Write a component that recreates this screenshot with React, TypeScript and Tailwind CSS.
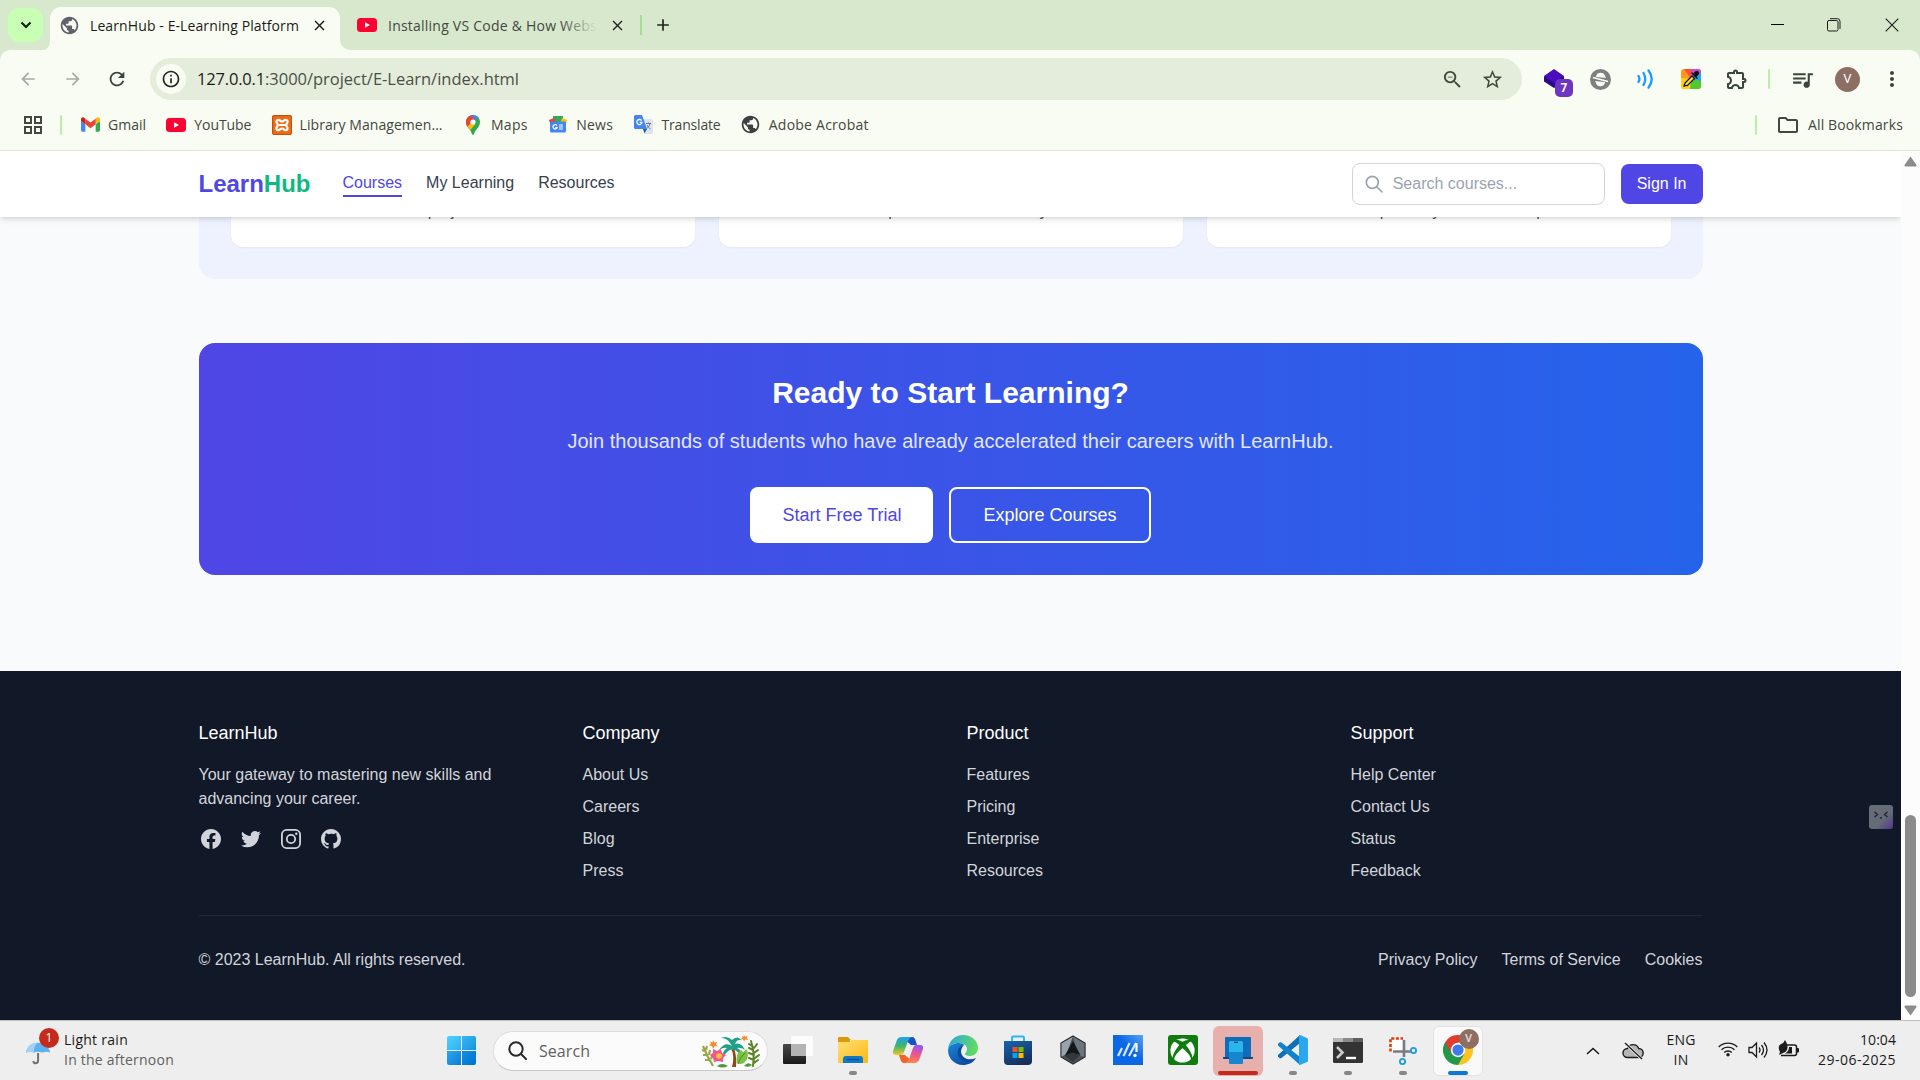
import { useLayoutEffect, useRef, useState, type ReactNode } from "react";
import {
  MdArrowBack,
  MdArrowForward,
  MdRefresh,
  MdOutlineInfo,
  MdZoomOut,
  MdStarOutline,
  MdOutlineExtension,
  MdQueueMusic,
  MdMoreVert,
  MdOutlineFolder,
  MdOutlineGridView,
  MdPublic,
  MdClose,
  MdAdd,
} from "react-icons/md";
import { FaXbox } from "react-icons/fa";

/* Single-line label whose tracking is adjusted so it fills a given width. */
function Fit({ w, className = "", children }: { w: number; className?: string; children: string }) {
  const ref = useRef<HTMLSpanElement>(null);
  const [ls, setLs] = useState(0);
  useLayoutEffect(() => {
    if (ref.current) {
      const natural = ref.current.getBoundingClientRect().width - ls * children.length;
      setLs((w - natural) / children.length);
    }
  }, []);
  return (
    <span ref={ref} className={`inline-block shrink-0 whitespace-pre ${className}`} style={{ letterSpacing: `${ls}px` }}>
      {children}
    </span>
  );
}

function YouTubeIcon() {
  return (
    <svg width="20" height="20" viewBox="0 0 20 20">
      <rect x="0" y="3" width="20" height="14" rx="3.5" fill="#ff0033" />
      <path d="M8 7.2 13 10l-5 2.8z" fill="#fff" />
    </svg>
  );
}

function GmailIcon() {
  return (
    <svg width="19" height="15" viewBox="52 42 88 66">
      <path fill="#4285f4" d="M58 108h14V74L52 59v43c0 3.32 2.69 6 6 6" />
      <path fill="#34a853" d="M120 108h14c3.32 0 6-2.69 6-6V59l-20 15" />
      <path fill="#fbbc04" d="M120 48v26l20-15v-8c0-7.42-8.47-11.65-14.4-7.2" />
      <path fill="#ea4335" d="M72 74V48l24 18 24-18v26L96 92" />
      <path fill="#c5221f" d="M52 51v8l20 15V48l-5.600-4.200c-5.940-4.450-14.400-.22-14.400 7.200" />
    </svg>
  );
}

function XamppIcon() {
  return (
    <svg width="20" height="20" viewBox="0 0 20 20">
      <rect width="20" height="20" rx="2" fill="#ef6c16" />
      <rect x="0.600" y="0.600" width="18.800" height="18.800" rx="1.600" fill="none" stroke="#b9500c" strokeWidth="1" />
      <path
        d="M6.500 4.800c-2 0-2.800 2-1.400 3.600 1 1.100 1 2.100 0 3.200-1.400 1.600-.6 3.600 1.400 3.600 1.500 0 1.800-1.700 3.500-1.700s2 1.700 3.500 1.700c2 0 2.800-2 1.400-3.600-1-1.100-1-2.100 0-3.200 1.400-1.600.6-3.600-1.400-3.600-1.500 0-1.800 1.700-3.500 1.700S8 4.800 6.500 4.800z"
        fill="none"
        stroke="#fff"
        strokeWidth="2.200"
      />
      <path d="M7 10h6" stroke="#fff" strokeWidth="2" />
    </svg>
  );
}

function MapsIcon() {
  return (
    <svg width="14" height="20" viewBox="0 0 14 20">
      <path d="M7 0C3 0 0 3 0 7c0 3.500 2 5.500 4 8 1.500 2 2 5 3 5s1.500-3 3-5c2-2.500 4-4.500 4-8 0-4-3-7-7-7z" fill="#34a853" />
      <path d="M0 7c0 2 .7 3.700 1.800 5.200L9.500 3 4.800.5C2 1.500 0 4 0 7z" fill="#ea4335" />
      <path d="M4.800.4 9.500 5l3.200-2.200C11 .8 7.500-.6 4.800.4z" fill="#4285f4" />
      <path d="m1.500 11.700 4-4.700 3.500 2.500-4.600 5.600c-1-1.200-2-2.200-2.900-3.400z" fill="#fbbc04" />
      <circle cx="7" cy="7" r="2.600" fill="#fff" />
    </svg>
  );
}

function NewsIcon() {
  return (
    <svg width="18" height="17" viewBox="0 0 18 17">
      <path d="M4 0h10v6H4z" fill="#34a853" />
      <path d="m0 4 5-2 2 5H1z" fill="#ea4335" />
      <path d="m18 4-5-2-2 5h6z" fill="#fbbc04" />
      <rect x="1" y="5.500" width="16" height="11" rx="1.500" fill="#4285f4" />
      <path d="M8 9.500a2.200 2.200 0 1 0 .2 2.200H6.200M10 9h4M10 11h4M10 13h4" stroke="#fff" strokeWidth="1.200" fill="none" />
    </svg>
  );
}

function TranslateIcon() {
  return (
    <svg width="19" height="19" viewBox="0 0 19 19">
      <path d="M8 4h9.500A1.500 1.500 0 0 1 19 5.500v12a1.500 1.500 0 0 1-1.500 1.500H11z" fill="#dfe3ea" />
      <path d="M1.500 0H8l5 14H1.500A1.500 1.500 0 0 1 0 12.500v-11A1.500 1.500 0 0 1 1.500 0z" fill="#4285f4" />
      <path d="m9 14 4 0-2.500 4.500z" fill="#1a56c4" />
      <path d="M7.500 5.500a2.600 2.600 0 1 0 .5 2H5.700" stroke="#fff" strokeWidth="1.300" fill="none" />
      <path d="M12 8.500h5M14.500 7.500v1M16 8.500c-.5 2.500-2 4-3.200 5M13 10c.8 2 2 3 3.500 4" stroke="#6b7785" strokeWidth="1" fill="none" />
    </svg>
  );
}

function Divider({ className = "" }: { className?: string }) {
  return <div className={`h-5 w-0.5 rounded bg-[#b9f0a8] ${className}`} />;
}

function TabStrip() {
  return (
    <div className="flex h-[50px] items-end bg-[#d7e8cd] font-['Open_Sans',sans-serif] text-[14px] text-[#1b1c18]">
      <div className="mb-2 ml-2 flex h-[34px] w-[35px] items-center justify-center rounded-[11px] bg-[#c9ffb5]">
        <svg width="12" height="8" viewBox="0 0 12 8" fill="none" stroke="#14210f" strokeWidth="2.200">
          <path d="m1.500 1.500 4.500 4.500 4.500-4.500" />
        </svg>
      </div>
      <svg width="7" height="10" viewBox="0 0 8 10" className="shrink-0" preserveAspectRatio="none">
        <path d="M8 0v10H0c5 0 8-4 8-10z" fill="#f8fcf2" />
      </svg>
      <div className="flex h-[43px] w-[290px] items-center rounded-t-[11px] bg-[#f8fcf2] pb-[7px] pl-[9px]">
        <MdPublic size={21} color="#5f6368" />
        <Fit w={209} className="ml-[10px]">LearnHub - E-Learning Platform</Fit>
        <MdClose size={17} className="ml-[12px]" />
      </div>
      <svg width="12" height="10" viewBox="0 0 12 10" className="shrink-0">
        <path d="M0 0v10h12C5 10 0 6 0 0z" fill="#f8fcf2" />
      </svg>
      <div className="flex h-[43px] items-center pb-[7px] pl-[5px] text-[#43483f]">
        <YouTubeIcon />
        <div className="relative ml-[11px] w-[209px] overflow-hidden">
          <Fit w={209}>{"Installing VS Code & How Webs"}</Fit>
          <div className="absolute inset-y-0 right-0 w-9 bg-gradient-to-r from-transparent to-[#d7e8cd]" />
        </div>
        <MdClose size={17} className="ml-[12px] text-[#22251f]" />
        <div className="ml-[14px] h-5 w-0.5 bg-[#a6dd94]" />
        <MdAdd size={20} className="ml-[11px] text-[#22251f]" />
      </div>
      <div className="ml-auto flex h-[50px] items-center pb-px text-[#1c1c1c]">
        <div className="mr-[43px] h-px w-[13px] bg-black" />
        <svg width="14" height="14" viewBox="0 0 14 14" fill="none" stroke="currentColor" className="mr-[44px]">
          <rect x="0.500" y="2.500" width="10.500" height="10.500" rx="1.500" />
          <path d="M3 .7h7.500a2.500 2.500 0 0 1 2.500 2.500V11" />
        </svg>
        <svg width="14" height="14" viewBox="0 0 14 14" stroke="currentColor" strokeWidth="1.100" className="mr-[21px]">
          <path d="m.7.7 12.600 12.600M13.300.7.7 13.300" />
        </svg>
      </div>
    </div>
  );
}

function Toolbar() {
  return (
    <div className="flex h-[58px] items-center rounded-t-[10px] bg-[#f8fcf2] font-['Open_Sans',sans-serif]">
      <MdArrowBack size={20} className="ml-[18px] text-[#a7aba2]" />
      <MdArrowForward size={20} className="ml-[25px] text-[#a7aba2]" />
      <MdRefresh size={22} className="ml-[23px] text-[#3a4636]" />
      <div className="ml-[22px] flex h-[42px] w-[1372px] items-center rounded-full bg-[#e4eddc] pl-[6px]">
        <div className="flex size-[30px] items-center justify-center rounded-full bg-[#f8fcf2]">
          <MdOutlineInfo size={20} color="#1f2a1b" />
        </div>
        <div className="ml-[11px] flex pt-px text-[16.500px]">
          <Fit w={68} className="text-[#1b1c18]">127.0.0.1</Fit>
          <Fit w={254} className="text-[#4b5046]">:3000/project/E-Learn/index.html</Fit>
        </div>
        <MdZoomOut size={23} className="ml-auto text-[#43483f]" />
        <MdStarOutline size={23} className="mr-[18px] ml-[17px] text-[#43483f]" />
      </div>
      <div className="relative ml-[22px] h-[26px] w-[31px]">
        <svg width="22" height="22" viewBox="0 0 22 22" className="mt-[3px]">
          <path d="m10 1 10 6.500v5L10 19 0 12.500v-5z" fill="#2a0a85" />
          <path d="m10 0 10 7-10 7L0 7z" fill="#4b0cc0" />
        </svg>
        <div className="absolute top-[13px] left-[11px] flex h-[18px] w-[18px] items-center justify-center rounded-[5px] bg-[#6c35c2] font-['Roboto',sans-serif] text-[12px] font-bold text-white">7</div>
      </div>
      <svg width="21" height="21" viewBox="0 0 21 21" className="ml-[15px]">
        <circle cx="10.500" cy="10.500" r="10.500" fill="#808080" />
        <path d="M6 8a4.600 4.600 0 0 1 9-1l1 2c-3 0-6-1-10-1zM15 13a4.600 4.600 0 0 1-9 1l-1-2c3 0 6 1 10 1z" fill="#f8fcf2" />
        <path d="m3 8.500 15 4" stroke="#f8fcf2" strokeWidth="1.800" />
      </svg>
      <svg width="17" height="20" viewBox="0 0 17 20" fill="none" stroke="#1a9bfc" strokeWidth="2.300" strokeLinecap="round" className="ml-[26px]">
        <path d="M1.500 7c1.200 2 1.200 4 0 6M6.500 4c2.300 4 2.300 8 0 12M11.500 1.500c4.200 5.500 4.200 11.500 0 17" />
      </svg>
      <svg width="20" height="20" viewBox="0 0 20 20" className="ml-[27px]">
        <defs>
          <clipPath id="picker"><rect width="20" height="20" rx="3" /></clipPath>
        </defs>
        <g clipPath="url(#picker)">
          <rect width="20" height="20" fill="#ff9a1f" />
          <path d="M10 10 3 0h9z" fill="#ff4a3d" />
          <path d="M10 10 11 0h9v6z" fill="#c24be0" />
          <path d="M10 10 20 4v9z" fill="#23a4f5" />
          <path d="M10 10 20 12v8H8z" fill="#54c92f" />
          <path d="M10 10 0 9v11h9z" fill="#ffd21c" />
        </g>
        <path d="m3 17 1-3 7-7 2.500 2.500-7 7z" fill="#ffe12b" stroke="#111" strokeWidth="1.300" />
        <path d="m10 4 6 6 1-1-1.500-1.500C18 6 19 4 17.500 2.500S14 2 12.500 4.500L11 3z" fill="#111" />
      </svg>
      <MdOutlineExtension size={24} className="ml-[24px] text-[#3a4636]" />
      <Divider className="ml-[19px]" />
      <MdQueueMusic size={25} className="ml-[20px] text-[#3a4636]" />
      <div className="ml-[20px] flex size-[25px] items-center justify-center rounded-full bg-[#8d6e63] font-['Roboto',sans-serif] text-[13px] text-white">V</div>
      <MdMoreVert size={24} className="ml-[20px] text-[#3a4636]" />
    </div>
  );
}

const bookmarks: { label: string; w: number; icon: ReactNode }[] = [
  { label: "Gmail", w: 38, icon: <GmailIcon /> },
  { label: "YouTube", w: 57, icon: <YouTubeIcon /> },
  { label: "Library Managemen...", w: 143, icon: <XamppIcon /> },
  { label: "Maps", w: 37, icon: <MapsIcon /> },
  { label: "News", w: 37, icon: <NewsIcon /> },
  { label: "Translate", w: 59, icon: <TranslateIcon /> },
  { label: "Adobe Acrobat", w: 100, icon: <MdPublic size={21} color="#3c4043" className="shrink-0" /> },
];

function BookmarkBar() {
  return (
    <div className="flex h-[43px] items-center border-b border-[#dfe6d3] bg-[#f8fcf2] pb-[9px] font-['Open_Sans',sans-serif] text-[14px] text-[#43483f]">
      <MdOutlineGridView size={24} className="ml-[21px] text-[#43483f]" />
      <Divider className="ml-[15px]" />
      <div className="ml-[18px] flex gap-[20.300px]">
        {bookmarks.map((b) => (
          <div key={b.label} className="flex items-center gap-2">
            <div className="flex w-5 shrink-0 items-center justify-center">{b.icon}</div>
            <Fit w={b.w} className="-mt-px">{b.label}</Fit>
          </div>
        ))}
      </div>
      <Divider className="ml-auto" />
      <MdOutlineFolder size={24} className="ml-[19px]" />
      <Fit w={95} className="-mt-px mr-[17px] ml-[8px]">All Bookmarks</Fit>
    </div>
  );
}

function SiteHeader() {
  return (
    <header className="relative z-10 flex h-[66px] shrink-0 items-center bg-white px-[198.500px] shadow-md">
      <div className="text-2xl font-bold text-[#4f46e5]">
        Learn<span className="text-[#10b981]">Hub</span>
      </div>
      <nav className="ml-8 flex h-[66px] items-start gap-6 pt-[20px] text-base text-[#374151]">
        <a className="h-[26px] border-b-2 border-[#4f46e5] text-[#4f46e5]">Courses</a>
        <a>My Learning</a>
        <a>Resources</a>
      </nav>
      <div className="ml-auto flex h-[42px] w-[253px] items-center rounded-lg border border-[#d1d5db] pl-3 text-[#9ca3af]">
        <svg width="18" height="18" viewBox="0 0 18 18" fill="none" stroke="currentColor" strokeWidth="1.700" strokeLinecap="round" className="mb-px">
          <circle cx="7.300" cy="7.300" r="6" />
          <path d="m12 12 5 5" />
        </svg>
        <span className="ml-[10px]">Search courses...</span>
      </div>
      <div className="ml-4 flex h-10 items-center rounded-lg bg-[#4f46e5] px-4 text-white">Sign In</div>
    </header>
  );
}

const featureLines = ["real projects faster", "of experts from the industry", "learns perfectly fitted to a step"];

const footerColumns = [
  { title: "Company", links: ["About Us", "Careers", "Blog", "Press"] },
  { title: "Product", links: ["Features", "Pricing", "Enterprise", "Resources"] },
  { title: "Support", links: ["Help Center", "Contact Us", "Status", "Feedback"] },
];

function SocialIcons() {
  return (
    <div className="mt-4 flex gap-4 text-[#d1d5db]">
      <svg width="24" height="24" viewBox="0 0 24 24" fill="currentColor">
        <path d="M22 12c0-5.523-4.477-10-10-10S2 6.477 2 12c0 4.991 3.657 9.128 8.438 9.878v-6.987h-2.540V12h2.540V9.797c0-2.506 1.492-3.890 3.777-3.890 1.094 0 2.238.195 2.238.195v2.460h-1.260c-1.243 0-1.630.771-1.630 1.562V12h2.773l-.443 2.890h-2.330v6.988C18.343 21.128 22 16.991 22 12z" />
      </svg>
      <svg width="24" height="24" viewBox="0 0 24 24" fill="currentColor">
        <path d="M8.290 20.251c7.547 0 11.675-6.253 11.675-11.675 0-.178 0-.355-.012-.53A8.348 8.348 0 0022 5.920a8.190 8.190 0 01-2.357.646 4.118 4.118 0 001.804-2.270 8.224 8.224 0 01-2.605.996 4.107 4.107 0 00-6.993 3.743 11.650 11.650 0 01-8.457-4.287 4.106 4.106 0 001.270 5.477A4.072 4.072 0 012.800 9.713v.052a4.105 4.105 0 003.292 4.022 4.095 4.095 0 01-1.853.07 4.108 4.108 0 003.834 2.850A8.233 8.233 0 012 18.407a11.616 11.616 0 006.290 1.840" />
      </svg>
      <svg width="24" height="24" viewBox="0 0 24 24" fill="none" stroke="currentColor" strokeWidth="1.800">
        <rect x="2.900" y="2.900" width="18.200" height="18.200" rx="4.800" />
        <circle cx="12" cy="12" r="4.200" />
        <circle cx="17.300" cy="6.700" r="1.200" fill="currentColor" stroke="none" />
      </svg>
      <svg width="24" height="24" viewBox="0 0 24 24" fill="currentColor">
        <path d="M12 2C6.477 2 2 6.484 2 12.017c0 4.425 2.865 8.180 6.839 9.504.5.092.682-.217.682-.483 0-.237-.008-.868-.013-1.703-2.782.605-3.369-1.343-3.369-1.343-.454-1.158-1.110-1.466-1.110-1.466-.908-.62.069-.608.069-.608 1.003.07 1.531 1.032 1.531 1.032.892 1.530 2.341 1.088 2.910.832.092-.647.350-1.088.636-1.338-2.220-.253-4.555-1.113-4.555-4.951 0-1.093.390-1.988 1.029-2.688-.103-.253-.446-1.272.098-2.650 0 0 .84-.27 2.750 1.026A9.564 9.564 0 0112 6.844c.85.004 1.705.115 2.504.337 1.909-1.296 2.747-1.027 2.747-1.027.546 1.379.202 2.398.1 2.651.64.7 1.028 1.595 1.028 2.688 0 3.848-2.339 4.695-4.566 4.943.359.309.678.92.678 1.855 0 1.338-.012 2.419-.012 2.747 0 .268.18.58.688.482A10.019 10.019 0 0022 12.017C22 6.484 17.522 2 12 2z" />
      </svg>
    </div>
  );
}

function SitePage() {
  return (
    <div className="relative flex h-[869px] w-[1901px] flex-col overflow-hidden bg-[#f9fafb] font-['Liberation_Sans',Arial,sans-serif]">
      <SiteHeader />
      <div className="mx-[198.500px] -mt-[20px] flex h-[82px] shrink-0 gap-6 rounded-b-2xl bg-[#eef2ff] px-8 pb-8">
        {featureLines.map((line) => (
          <div key={line} className="flex-1 rounded-b-xl bg-white pt-[2px] text-center text-base text-[#4b5563] shadow-[0_1px_2px_rgba(0,0,0,0.05)]">
            {line}
          </div>
        ))}
      </div>
      <section className="mx-[198.500px] mt-16 flex h-[232px] shrink-0 flex-col items-center rounded-2xl bg-linear-to-r/srgb from-[#4f46e5] to-[#2563eb] pt-8 text-white">
        <h2 className="text-[30px] leading-9 font-bold">Ready to Start Learning?</h2>
        <p className="mt-4 text-xl leading-7 text-[#e0e7ff]">
          Join thousands of students who have already accelerated their careers with LearnHub.
        </p>
        <div className="mt-8 flex gap-4 text-lg">
          <div className="flex h-14 items-center rounded-lg bg-white px-8 text-[#4f46e5]">Start Free Trial</div>
          <div className="flex h-14 items-center rounded-lg border-2 border-white px-8">Explore Courses</div>
        </div>
      </section>
      <footer className="mt-24 flex-1 bg-[#111827] px-[198.500px] pt-12 text-base text-[#d1d5db]">
        <div className="grid grid-cols-4 gap-8">
          <div>
            <h3 className="text-lg leading-7 text-white">LearnHub</h3>
            <p className="mt-4">
              Your gateway to mastering new skills and
              <br />
              advancing your career.
            </p>
            <SocialIcons />
          </div>
          {footerColumns.map((c) => (
            <div key={c.title}>
              <h3 className="text-lg leading-7 text-white">{c.title}</h3>
              <ul className="mt-4 space-y-2">
                {c.links.map((l) => (
                  <li key={l}>{l}</li>
                ))}
              </ul>
            </div>
          ))}
        </div>
        <div className="mt-8 flex justify-between border-t border-[#1f2937] pt-8">
          <p>© 2023 LearnHub. All rights reserved.</p>
          <div className="flex gap-6">
            <span>Privacy Policy</span>
            <span>Terms of Service</span>
            <span>Cookies</span>
          </div>
        </div>
      </footer>
      <div className="absolute top-[654px] left-[1869px] flex h-[24px] w-[24px] justify-center rounded-[3px] bg-gradient-to-br from-[#666b78] from-60% to-[#55308a] pt-[6px]">
        <svg width="16" height="8" viewBox="0 0 16 8" fill="none" stroke="#1b2030" strokeWidth="1.300">
          <path d="m1.500 1 3 2.500-3 2.500M14.500 1l-3 2.500 3 2.500M7 6.500q1 1 2 0" />
        </svg>
      </div>
    </div>
  );
}

function Scrollbar() {
  return (
    <div className="flex w-[19px] flex-col items-center bg-[#fcfcfc]">
      <svg width="13" height="11" viewBox="0 0 13 11" className="mt-[5px]">
        <path d="M6.500.5 12.500 9q.3 1.500-1 1.500h-10Q.2 10.500.5 9z" fill="#8b8b8b" />
      </svg>
      <div className="mt-auto h-[182px] w-[11px] rounded-full bg-[#8b8b8b]" />
      <svg width="13" height="11" viewBox="0 0 13 11" className="mt-[8px] mb-[4px]">
        <path d="M6.500 10.500 12.500 2q.3-1.500-1-1.500h-10Q.2.500.5 2z" fill="#8b8b8b" />
      </svg>
    </div>
  );
}

function PalmArt() {
  return (
    <svg width="60" height="34" viewBox="0 0 60 34">
      <g stroke="#9ba84a" strokeWidth="2.200" fill="none">
        <path d="M2 12q4 10 10 20M4 17l-3-1M7 21l-5 0M9 26l-5 0M5 16l1-4M8 21l1-5M10 25l2-5" />
      </g>
      <path d="M30 14q4 9 1 19h4q1-10-2-19z" fill="#8a4b1c" />
      <path d="M31 12Q24 7 18 16q5-3 8-2-5 3-4 10 3-7 9-9 7 2 9 8 1-7-4-9 4-1 8 2-4-8-10-6 2-5 7-4-5-5-10 0-5-5-11-2 6 0 9 5z" fill="#1fa187" />
      <path d="M36 29q-2-9 4-13l2 2 4-3q3 9-3 14-4 2-7 0z" fill="#7cc142" />
      <path d="M37 30q2-7 7-11" stroke="#3f8f2a" fill="none" />
      <path d="m12 15 4 2 4-2 1 4 4 2-3 3 0 4-5-1-4 1-1-4-3-3 3-2z" fill="#f0588b" />
      <circle cx="18" cy="22" r="2.800" fill="#fbc33c" />
      <g fill="#f58b2b">
        <path d="m12 6 1.500 2.500L16 8l-1 2.500 1.500 2-3-.2L12 15l-1-3-3-.5 2-1.800L9 7.500l2.500 1z" />
        <path d="m43 1 1 1.800L46.500 2l-.5 2 1 2-2.500-.5L43 7.500l-.8-2L40 5l1.500-1.500L41 2l1.500.8z" />
      </g>
      <path d="M16 32q5-4 11 0-6 3-11 0zM43 32q4-5 8-1-3 3-8 1z" fill="#4d9b33" />
      <g stroke="#5c8427" strokeWidth="2" fill="none" strokeLinecap="round">
        <path d="M50 7q4 12 2 25M51 12l-3-2M52 16l-4-2M53 21l-5-2M53 26l-5-2M53 14l3-4M53 19l4-3M54 24l4-3M53 29l4-3" />
      </g>
    </svg>
  );
}

function WindowsLogo() {
  return (
    <div className="grid size-[29px] grid-cols-2 gap-px overflow-hidden rounded-[2px]">
      <div className="bg-gradient-to-br from-[#4fd2ff] to-[#2bb0f2]" />
      <div className="bg-gradient-to-br from-[#36b8f4] to-[#1593e2]" />
      <div className="bg-gradient-to-br from-[#2aa8ee] to-[#0a7dd6]" />
      <div className="bg-gradient-to-br from-[#1590e0] to-[#0072cf]" />
    </div>
  );
}

const taskIcons: { key: string; tile?: "red" | "white"; dot?: boolean; art: ReactNode }[] = [
  {
    key: "taskview",
    art: (
      <svg width="30" height="30" viewBox="0 0 30 30">
        <defs>
          <linearGradient id="tv" x1="0" y1="0" x2="0" y2="1"><stop stopColor="#484848" /><stop offset="1" stopColor="#1a1a1a" /></linearGradient>
        </defs>
        <rect x="0" y="9" width="23" height="20" rx="1" fill="url(#tv)" />
        <rect x="8" y="1" width="22" height="20" rx="1" fill="#fff" fillOpacity="0.800" />
        <rect x="8" y="9" width="15" height="12" fill="#b4b4b4" />
      </svg>
    ),
  },
  {
    key: "explorer",
    dot: true,
    art: (
      <svg width="30" height="28" viewBox="0 0 30 28">
        <defs>
          <linearGradient id="ex" x1="0" y1="0" x2="1" y2="1"><stop stopColor="#ffe07a" /><stop offset="1" stopColor="#fbb80f" /></linearGradient>
        </defs>
        <path d="M0 2q0-1 1-1h9l3 3h-1v4H0z" fill="#dc9a08" />
        <path d="M0 6h11l3-2h16v22q0 1-1 1H1q-1 0-1-1z" fill="url(#ex)" />
        <path d="M5 27v-4q0-3 3-3h14q3 0 3 3v4z" fill="#0f78c8" />
        <path d="M9 23.500h12" stroke="#0a4c86" strokeWidth="1.300" />
      </svg>
    ),
  },
  {
    key: "copilot",
    art: (
      <svg width="30" height="28" viewBox="0 0 30 28">
        <defs>
          <linearGradient id="cpa" x1="0" y1="0" x2="0" y2="1"><stop stopColor="#1aa3ec" /><stop offset="0.500" stopColor="#3db56f" /><stop offset="1" stopColor="#f0c624" /></linearGradient>
          <linearGradient id="cpb" x1="0.500" y1="0" x2="0.300" y2="1"><stop stopColor="#9a55f0" /><stop offset="0.500" stopColor="#f0558b" /><stop offset="1" stopColor="#fb8a44" /></linearGradient>
        </defs>
        <path d="M9 1h10q3 0 4 5l1 3h-6z" fill="#1b4fc9" />
        <path d="M21 27H11q-3 0-4-5l-1-3h6z" fill="#f0632c" />
        <path d="M9 1h6q3 0 4 0-3 1-4 4l-4 11q-1 3-4 3H3q-4 0-3-4L4 4q1-3 5-3z" fill="url(#cpa)" />
        <path d="M21 27h-9q3-1 4-4l4-11q1-3 3-3h4q4 0 3 4l-4 11q-1 3-5 3z" fill="url(#cpb)" />
      </svg>
    ),
  },
  {
    key: "edge",
    art: (
      <svg width="30" height="30" viewBox="0 0 30 30">
        <defs>
          <linearGradient id="ea" x1="0" y1="0.300" x2="1" y2="0.500"><stop stopColor="#2ba9e0" /><stop offset="1" stopColor="#63dd5a" /></linearGradient>
          <linearGradient id="eb" x1="0" y1="0" x2="0.600" y2="1"><stop stopColor="#1b86d6" /><stop offset="1" stopColor="#0c4da2" /></linearGradient>
        </defs>
        <path d="M0 14C1 6 7 0 15 0c9 0 15 6 15 13 0 5-4 8-8 8-3 0-5-1-5-2s2-2 2-5c0-4-4-6-8-6C6 8 2 10 0 14z" fill="url(#ea)" />
        <path d="M0 15C1 10 6 8 11 8c2 0 4 .7 5.500 2C12 11 11 14 11 17c0 6 5 9 9 9 3 0 6-1 8-3-3 5-8 7-13 7C6 30 0 23 0 15z" fill="url(#eb)" />
        <path d="M16 10c-5 1-7 5-6 10 2 6 9 8 15 6l3-3c-6 3-14 1-15-6 0-3 1-5 3-7z" fill="#0b4a98" />
      </svg>
    ),
  },
  {
    key: "store",
    art: (
      <svg width="30" height="30" viewBox="0 0 30 30">
        <defs>
          <linearGradient id="st" x1="0" y1="0" x2="0.500" y2="1"><stop stopColor="#1666b4" /><stop offset="1" stopColor="#16305c" /></linearGradient>
        </defs>
        <path d="M9 7V2.500q0-1 1-1h10q1 0 1 1V7" fill="none" stroke="#2fb7ef" strokeWidth="2" />
        <path d="M1 6h28v20q0 4-4 4H5q-4 0-4-4z" fill="url(#st)" />
        <path d="M9.500 12h5v5h-5z" fill="#f25022" /><path d="M15.500 12h5v5h-5z" fill="#7fba00" />
        <path d="M9.500 18h5v5h-5z" fill="#00a4ef" /><path d="M15.500 18h5v5h-5z" fill="#ffb900" />
      </svg>
    ),
  },
  {
    key: "crate",
    art: (
      <svg width="26" height="30" viewBox="0 0 28 30" preserveAspectRatio="none">
        <path d="M14 1 27 8v14l-13 7L1 22V8z" fill="#4a5057" />
        <path d="M14 1 27 8v14l-8-2z" fill="#6d757d" />
        <path d="M14 1 1 8v14l6-3z" fill="#9aa3ab" />
        <path d="m14 1 13 7v14l-13 7L1 22V8z" fill="none" stroke="#2a2e33" strokeWidth="1.200" />
        <path d="m14 6 8 14-9-2-8 3z" fill="#15181b" />
        <path d="m5 21 8-3 9 2-8 7z" fill="#33383d" />
      </svg>
    ),
  },
  {
    key: "myasus",
    art: (
      <svg width="30" height="30" viewBox="0 0 30 30">
        <defs>
          <linearGradient id="ma" x1="0" y1="1" x2="1" y2="0"><stop offset="0.550" stopColor="#0a68e4" /><stop offset="1" stopColor="#5aa2f8" /></linearGradient>
        </defs>
        <rect width="30" height="30" fill="url(#ma)" />
        <path d="m5 21 4-8M10.500 21l6-13M16 21l7-13" stroke="#d9e8ff" strokeWidth="2.200" />
        <path d="M23.500 8v9" stroke="#fff" strokeWidth="2.200" /><circle cx="22" cy="20.500" r="1.700" fill="#fff" />
      </svg>
    ),
  },
  {
    key: "xbox",
    art: (
      <div className="flex size-[30px] items-center justify-center rounded-[3px] bg-[#107c10] text-white">
        <FaXbox size={25} />
      </div>
    ),
  },
  {
    key: "phonelink",
    tile: "red",
    art: (
      <svg width="30" height="28" viewBox="0 0 30 28">
        <path d="M2 2q0-1 1-1h24q1 0 1 1v19H2z" fill="#0f6cba" />
        <path d="M0 21h30v1q0 1-1 1H1q-1 0-1-1z" fill="#0a4a86" />
        <rect x="6" y="5" width="14" height="23" rx="1.500" fill="#2ab6ea" />
        <path d="M6 16h14v10.500q0 1.500-1.500 1.500h-11Q6 28 6 26.500z" fill="#1686cf" />
        <path d="M11 6.300h4" stroke="#073c6e" strokeWidth="1.200" />
      </svg>
    ),
  },
  {
    key: "vscode",
    dot: true,
    art: (
      <svg width="30" height="30" viewBox="0 0 30 30">
        <path d="M22 0 0 20q-.5 1 0 1.500l1.500 1.500q1 .7 2 0L22 8z" fill="#0f6fb8" />
        <path d="M22 30 0 10.500q-.5-1 0-1.700L1.500 7.500q1-.7 2 0L22 22z" fill="#1382cc" />
        <path d="m21 0 1 0 7 3q1 .5 1 1.500v21q0 1-1 1.500l-7 3-1 0z" fill="#29a8f0" />
      </svg>
    ),
  },
  {
    key: "terminal",
    dot: true,
    art: (
      <svg width="30" height="25" viewBox="0 0 30 25">
        <rect width="30" height="25" rx="1.500" fill="#333" />
        <path d="M0 4V1.500Q0 0 1.500 0H10v4z" fill="#b8b8b8" /><path d="M10 0h10v4H10z" fill="#8a8a8a" />
        <path d="M20 0h8.500Q30 0 30 1.500V4H20z" fill="#5e5e5e" />
        <path d="m4 9 5.500 5.500L4 20" stroke="#ccc" strokeWidth="2.600" fill="none" /><path d="M13 20h10" stroke="#fff" strokeWidth="2.400" />
      </svg>
    ),
  },
  {
    key: "snip",
    dot: true,
    art: (
      <svg width="28" height="30" viewBox="0 0 28 30">
        <rect x="1.500" y="3.500" width="12" height="13" fill="#fff" fillOpacity="0.850" />
        <path d="M1.500 16.500v-13h12.500" fill="none" stroke="#d8420e" strokeWidth="2.600" strokeDasharray="3 1.600" />
        <path d="M15 5v17M4 16.500h18" stroke="#777c82" strokeWidth="2.600" />
        <circle cx="24.500" cy="15.500" r="2.600" fill="none" stroke="#1e9ae0" strokeWidth="1.800" />
        <circle cx="13.500" cy="26.500" r="2.600" fill="none" stroke="#1e9ae0" strokeWidth="1.800" />
      </svg>
    ),
  },
  {
    key: "chrome",
    tile: "white",
    art: (
      <div className="relative">
        <svg width="30" height="30" viewBox="0 0 48 48">
          <path d="M24 24 3.200 12A24 24 0 0 1 44.800 12z" fill="#e33b2e" />
          <path d="M24 24 44.800 12A24 24 0 0 1 24 48z" fill="#fcc31e" />
          <path d="M24 24V48A24 24 0 0 1 3.200 12z" fill="#23984b" />
          <path d="M24 12h20.800L34.400 30z" fill="#fcc31e" />
          <path d="M34.400 30 24 48 13.600 30z" fill="#23984b" />
          <path d="M13.600 30 3.200 12 24 12z" fill="#e33b2e" />
          <circle cx="24" cy="24" r="11.500" fill="#fff" /><circle cx="24" cy="24" r="9" fill="#3c7bea" />
        </svg>
        <div className="absolute -top-[6px] left-[16px] flex size-5 items-center justify-center rounded-full bg-[#8d6e63] font-['Roboto',sans-serif] text-[11px] font-medium text-[#e6dcd8]">V</div>
      </div>
    ),
  },
];

const tileStyles = {
  red: "rounded-md bg-[#e8b0ac]",
  white: "rounded-md border border-[#e2e2e2] bg-[#f9f9f9]",
};

function Taskbar() {
  return (
    <div className="flex h-[60px] items-center border-t border-[#bdbdc2] bg-[#eeeeee] font-['Open_Sans',sans-serif] text-[#1b1b1b]">
      <div className="relative ml-[26px] h-[38px] w-[34px]">
        <svg width="26" height="28" viewBox="0 0 28 28" className="mt-[8px]">
          <path d="M13 13v8q0 3-2.500 3T8 21.500" fill="none" stroke="#77716e" strokeWidth="2.200" />
          <path d="M0 12.500C1 6 6 2 12.500 2S25 6 26 12.500l-4-1-4.500 1-5-1-4 1-4-1z" fill="#5fb0f0" />
          <path d="M0 12.500C1 6 6 2 12.500 2 9 5 8.500 9 8.500 12.500l-4-1z" fill="#a3d1f8" />
        </svg>
        <div className="absolute -top-[4px] left-[13px] flex size-5 items-center justify-center rounded-full bg-[#c42b1c] text-[12px] text-white">1</div>
      </div>
      <div className="ml-[4px] flex flex-col items-start pb-[2px] text-[14px] leading-5">
        <Fit w={64}>Light rain</Fit>
        <Fit w={110} className="text-[#5f5f5f]">In the afternoon</Fit>
      </div>
      <div className="ml-[273px]"><WindowsLogo /></div>
      <div className="ml-[17px] flex h-[40px] w-[275px] items-center rounded-full border border-b-[#c8c8c8] border-[#dedede] bg-[#fbfbfb] pl-[14px]">
        <svg width="19" height="19" viewBox="0 0 19 19" fill="none" stroke="#2a2a2a" strokeWidth="2" strokeLinecap="round">
          <circle cx="8" cy="8" r="6.700" />
          <path d="m13 13 5 5" />
        </svg>
        <Fit w={51} className="ml-[12px] text-[16px] text-[#606060]">Search</Fit>
        <div className="mr-[6px] ml-auto"><PalmArt /></div>
      </div>
      <div className="ml-[2px] flex h-[59px]">
        {taskIcons.map((t) => (
          <div key={t.key} className="relative flex w-[55px] items-center justify-center">
            <div className={`flex h-[50px] w-[50px] items-center justify-center pb-px ${t.tile ? tileStyles[t.tile] : ""}`}>{t.art}</div>
            {t.dot && <div className="absolute bottom-[5px] h-1 w-2 rounded-full bg-[#868686]" />}
            {t.tile === "red" && <div className="absolute bottom-[5px] h-1 w-10 rounded-full bg-[#c42b1c]" />}
            {t.tile === "white" && <div className="absolute bottom-[5px] h-1 w-5 rounded-full bg-[#0a78d4]" />}
          </div>
        ))}
      </div>
      <div className="mr-[24px] ml-auto flex items-center">
        <svg width="14" height="8" viewBox="0 0 14 8" fill="none" stroke="currentColor" strokeWidth="1.600"><path d="m1 7 6-5.500L13 7" /></svg>
        <svg width="22" height="18" viewBox="0 0 22 18" fill="none" stroke="currentColor" strokeWidth="1.400" className="ml-[22px]">
          <path d="M5.500 15.500a4.500 4.500 0 0 1 0-9 6 6 0 0 1 11.200 0 4.500 4.500 0 0 1 0 9z" fill="#b5b5b5" />
          <path d="m3 1 17 16" stroke="#eee" strokeWidth="3" /><path d="m3 1 17 16" />
        </svg>
        <div className="ml-[22px] flex w-[30px] flex-col items-center pb-[2px] text-[14px] leading-5">
          <Fit w={29}>ENG</Fit>
          <Fit w={15}>IN</Fit>
        </div>
        <svg width="20" height="16" viewBox="0 0 20 16" fill="none" stroke="currentColor" strokeWidth="1.400" className="mb-[3px] ml-[22px]">
          <path d="M.7 6a13 13 0 0 1 18.600 0M3.500 8.800a9.200 9.200 0 0 1 13 0M6.300 11.500a5.300 5.300 0 0 1 7.400 0" />
          <circle cx="10" cy="13.800" r="1.700" fill="currentColor" stroke="none" />
        </svg>
        <svg width="20" height="18" viewBox="0 0 20 18" fill="none" stroke="currentColor" strokeWidth="1.300" className="mb-[2px] ml-[10px]">
          <path d="M1 6.500h3L8.500 2v14L4 11.500H1zM11 6.500q2 2.500 0 5M13.500 4q4 5 0 10M16 1.500q6 7.500 0 15" />
        </svg>
        <svg width="21" height="18" viewBox="0 0 21 18" className="mb-[3px] ml-[10px]">
          <path d="M9 5h7.500q2 0 2 2v6.500q0 2-2 2H3" fill="none" stroke="#1b1b1b" strokeWidth="1.500" />
          <path d="M19 8h1q1 0 1 1v2.500q0 1-1 1h-1z" fill="#1b1b1b" />
          <path d="M7 0q3 4 2.500 8T5 13L1 15l1-3Q-1 6 3 4q3-1 4-4z" fill="#1b1b1b" />
          <path d="M11 7h3v6.500H7q4-2 4-6.500z" fill="#1b1b1b" />
        </svg>
        <div className="ml-[19px] flex flex-col items-end pb-[2px] text-[14px] leading-5">
          <Fit w={36}>10:04</Fit>
          <Fit w={78}>29-06-2025</Fit>
        </div>
      </div>
    </div>
  );
}

export default function App() {
  return (
    <div className="flex h-[1080px] w-[1920px] flex-col overflow-hidden">
      <TabStrip />
      <div className="bg-[#d7e8cd]"><Toolbar /></div>
      <BookmarkBar />
      <div className="flex h-[869px]">
        <SitePage />
        <Scrollbar />
      </div>
      <Taskbar />
    </div>
  );
}
